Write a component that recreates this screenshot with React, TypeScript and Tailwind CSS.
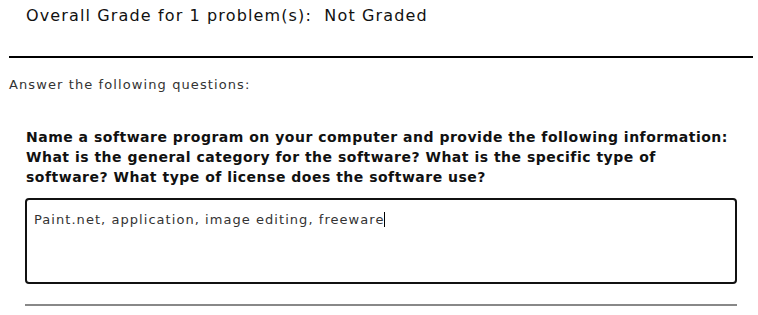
export default function App() {
  return (
    <div className="w-[758px] h-[315px] overflow-hidden bg-white text-black font-['DejaVu_Sans',Verdana,sans-serif]">
      <div className="pl-[26px] pt-[6px] text-[16px] leading-[20px] tracking-[1.13px] text-[#111]">
        Overall Grade for 1 problem(s):&nbsp; Not Graded
      </div>
      <div className="mt-[30px] ml-[9px] w-[744px] h-[2px] bg-black" />
      <div className="mt-[19px] ml-[9px] text-[13px] leading-[16px] tracking-[1.1px] text-[#333]">
        Answer the following questions:
      </div>
      <div className="mt-[34px] ml-[26px] whitespace-nowrap text-[14px] leading-[20px] tracking-[0.5px] font-bold text-[#111]">
        Name a software program on your computer and provide the following information:
        <br />
        What is the general category for the software? What is the specific type of
        <br />
        software? What type of license does the software use?
      </div>
      <div className="mt-[11px] ml-[25px] w-[712px] h-[86px] border-2 border-[#111] rounded-[4px] pl-[7px] pt-[12px] text-[13px] leading-[16px] tracking-[1.05px] text-[#333]">
        <span>Paint.net, application, image editing, freeware</span>
        <span className="inline-block w-[1px] h-[15px] bg-black align-[-3px]" />
      </div>
      <div className="mt-[20px] ml-[25px] w-[712px] h-[2px] bg-[#888]" />
    </div>
  );
}
